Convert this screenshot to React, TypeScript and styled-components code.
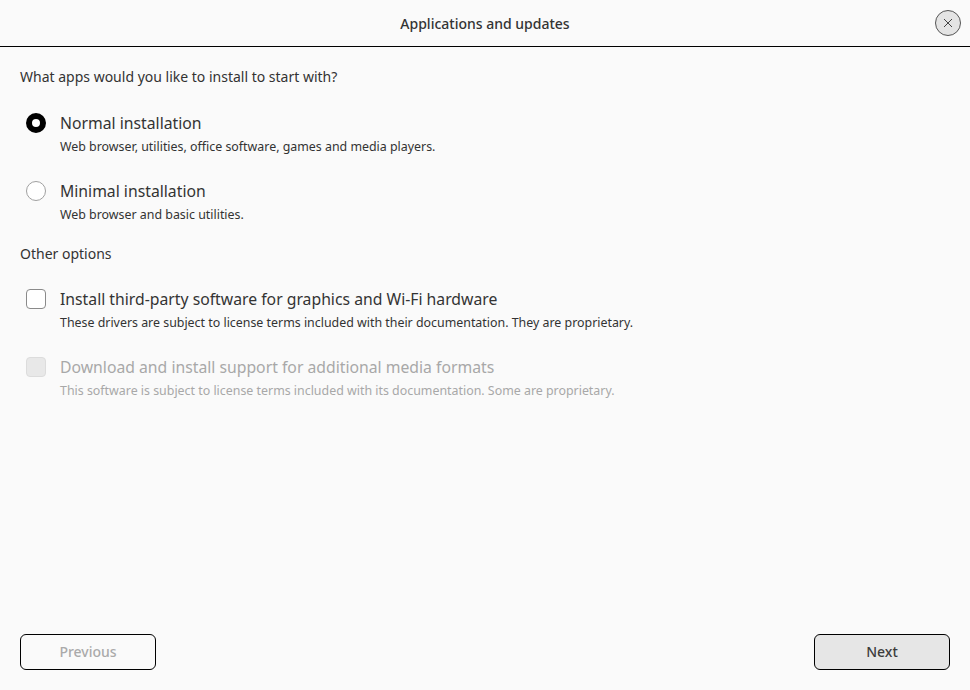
import styled, { createGlobalStyle } from "styled-components";

const Global = createGlobalStyle`
  html, body {
    margin: 0;
    padding: 0;
    background: #fafafa;
  }
  body {
    font-family: "Noto Sans", "DejaVu Sans", sans-serif;
    color: #333;
  }
`;

const Page = styled.div`
  width: 970px;
  height: 690px;
  display: flex;
  flex-direction: column;
  background: #fafafa;
`;

const Header = styled.header`
  height: 46px;
  flex-shrink: 0;
  display: grid;
  grid-template-columns: 1fr auto 1fr;
  align-items: center;
  border-bottom: 1px solid #000;
`;

const Title = styled.h1`
  grid-column: 2;
  margin: 0;
  font-size: 14px;
  font-weight: 500;
  color: #333;
`;

const CloseButton = styled.button`
  grid-column: 3;
  justify-self: end;
  margin-right: 9px;
  width: 26px;
  height: 26px;
  border-radius: 50%;
  border: 1px solid #555;
  background: #e4e4e4;
  display: flex;
  align-items: center;
  justify-content: center;
  padding: 0;
  color: #444;
`;

const Content = styled.main`
  flex: 1;
  display: flex;
  flex-direction: column;
  padding: 20px 20px 0;
`;

const Section = styled.p`
  margin: 0;
  font-size: 14px;
  line-height: 20px;
  color: #333;
`;

const OptionList = styled.div<{ $top?: number }>`
  display: flex;
  flex-direction: column;
  gap: 23px;
  padding: ${(p) => p.$top ?? 24}px 0 20px 6px;
`;

const Option = styled.label<{ $disabled?: boolean }>`
  display: grid;
  grid-template-columns: 20px 1fr;
  column-gap: 14px;
  row-gap: 3px;
  align-items: center;
  color: ${(p) => (p.$disabled ? "#a8a8a8" : "#333")};
`;

const Label = styled.span`
  font-size: 15.75px;
  line-height: 24px;
`;

const Description = styled.span`
  grid-column: 2;
  font-size: 12.4px;
  line-height: 18px;
  color: inherit;
`;

const Radio = styled.span<{ $checked?: boolean }>`
  width: 20px;
  height: 20px;
  box-sizing: border-box;
  border-radius: 50%;
  border: ${(p) => (p.$checked ? "6px solid #000" : "1px solid #a0a0a0")};
  background: #fff;
`;

const Check = styled.span<{ $disabled?: boolean }>`
  width: 20px;
  height: 20px;
  box-sizing: border-box;
  border-radius: 4px;
  border: 1px solid ${(p) => (p.$disabled ? "#dcdcdc" : "#8a8a8a")};
  background: ${(p) => (p.$disabled ? "#e8e8e8" : "#fff")};
`;

const Footer = styled.footer`
  display: flex;
  justify-content: space-between;
  padding: 0 20px 20px;
`;

const NavButton = styled.button<{ $primary?: boolean }>`
  width: 136px;
  height: 36px;
  border: 1px solid #000;
  border-radius: 6px;
  background: ${(p) => (p.$primary ? "#e6e6e6" : "transparent")};
  color: ${(p) => (p.$primary ? "#3c3c3c" : "#aaa")};
  font-family: "Noto Sans", sans-serif;
  font-size: 14px;
  font-weight: 500;
  line-height: 20px;
  padding: 0;
`;

export default function App() {
  return (
    <Page>
      <Global />
      <Header>
        <Title>Applications and updates</Title>
        <CloseButton aria-label="Close">
          <svg width="10" height="10" viewBox="0 0 10 10">
            <path d="M1 1 L9 9 M9 1 L1 9" stroke="currentColor" strokeWidth="1" />
          </svg>
        </CloseButton>
      </Header>
      <Content>
        <Section>What apps would you like to install to start with?</Section>
        <OptionList>
          <Option>
            <Radio $checked />
            <Label>Normal installation</Label>
            <Description>Web browser, utilities, office software, games and media players.</Description>
          </Option>
          <Option>
            <Radio />
            <Label>Minimal installation</Label>
            <Description>Web browser and basic utilities.</Description>
          </Option>
        </OptionList>
        <Section>Other options</Section>
        <OptionList $top={23}>
          <Option>
            <Check />
            <Label>Install third-party software for graphics and Wi-Fi hardware</Label>
            <Description>These drivers are subject to license terms included with their documentation. They are proprietary.</Description>
          </Option>
          <Option $disabled>
            <Check $disabled />
            <Label>Download and install support for additional media formats</Label>
            <Description>This software is subject to license terms included with its documentation. Some are proprietary.</Description>
          </Option>
        </OptionList>
      </Content>
      <Footer>
        <NavButton disabled>Previous</NavButton>
        <NavButton $primary>Next</NavButton>
      </Footer>
    </Page>
  );
}
